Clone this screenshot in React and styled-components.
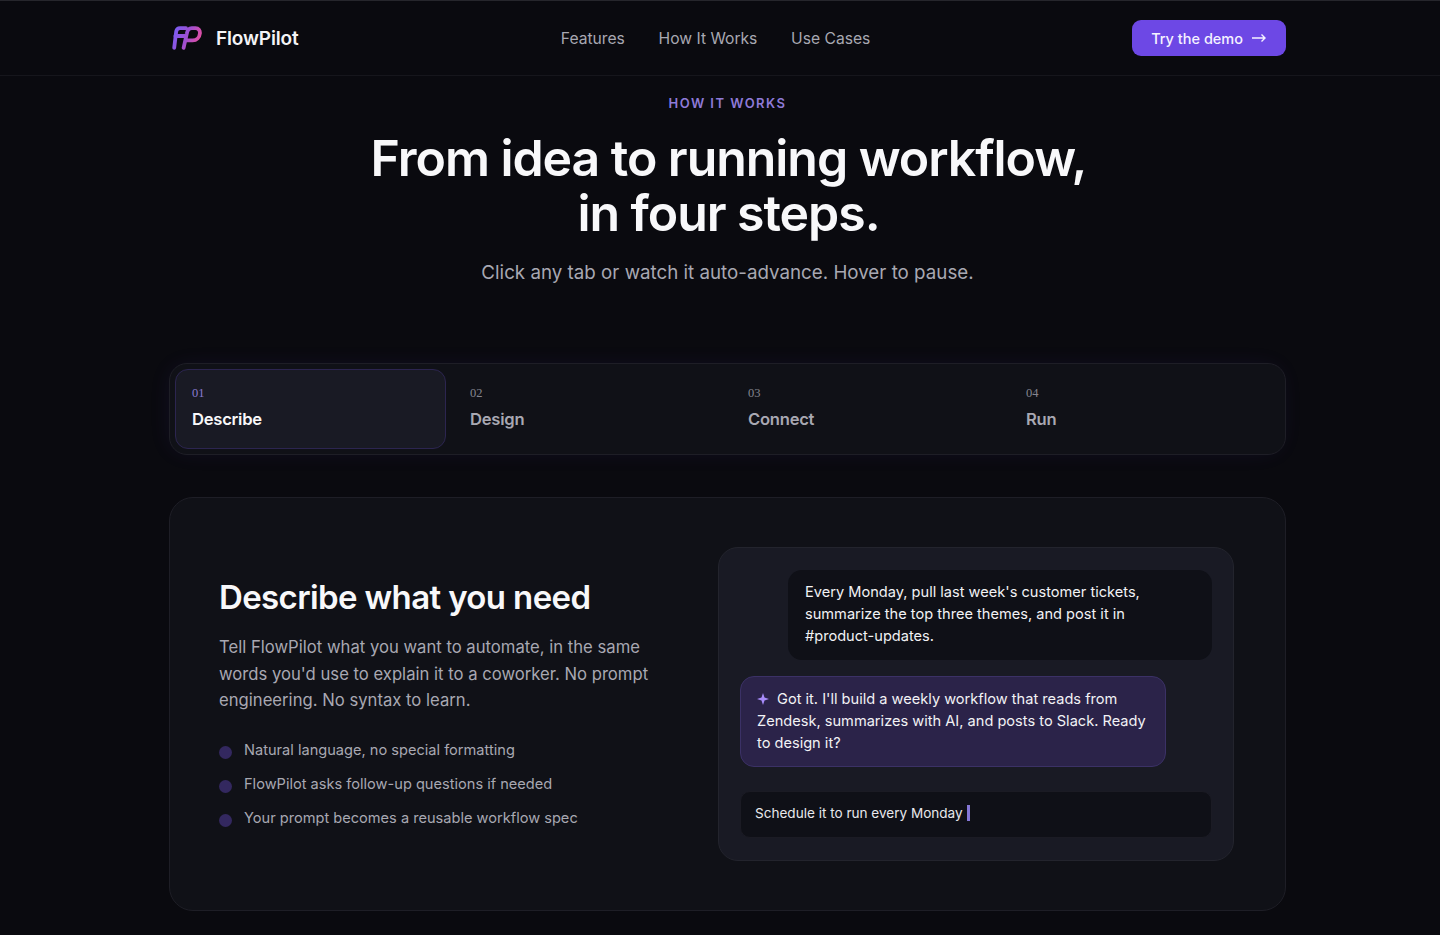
import React from 'react'
import styled, { createGlobalStyle } from 'styled-components'

const tabs = [
  { num: '01', label: 'Describe', active: true },
  { num: '02', label: 'Design' },
  { num: '03', label: 'Connect' },
  { num: '04', label: 'Run' },
]

const points = [
  'Natural language, no special formatting',
  'FlowPilot asks follow-up questions if needed',
  'Your prompt becomes a reusable workflow spec',
]

const navLinks = ['Features', 'How It Works', 'Use Cases']

export default function App() {
  return (
    <Page>
      <GlobalStyle />
      <Header>
        <Nav>
          <Brand>
            <Logo />
            <BrandName>FlowPilot</BrandName>
          </Brand>
          <NavLinks>
            {navLinks.map(link => (
              <NavLink key={link}>{link}</NavLink>
            ))}
          </NavLinks>
          <DemoButton>
            Try the demo
            <ArrowIcon />
          </DemoButton>
        </Nav>
      </Header>

      <Main>
        <Intro>
          <Eyebrow>HOW IT WORKS</Eyebrow>
          <Title>
            From idea to running workflow,
            <br />
            in four steps.
          </Title>
          <Lead>Click any tab or watch it auto-advance. Hover to pause.</Lead>
        </Intro>

        <TabBar>
          {tabs.map(tab => (
            <Tab key={tab.num} $active={tab.active}>
              <TabNum $active={tab.active}>{tab.num}</TabNum>
              <TabLabel $active={tab.active}>{tab.label}</TabLabel>
            </Tab>
          ))}
        </TabBar>

        <Card>
          <Copy>
            <CardTitle>Describe what you need</CardTitle>
            <CardText>
              Tell FlowPilot what you want to automate, in the same words you'd use to explain it
              to a coworker. No prompt engineering. No syntax to learn.
            </CardText>
            <Points>
              {points.map(point => (
                <Point key={point}>{point}</Point>
              ))}
            </Points>
          </Copy>

          <Chat>
            <UserBubble>
              Every Monday, pull last week's customer tickets, summarize the top three themes, and
              post it in #product-updates.
            </UserBubble>
            <BotBubble>
              <Sparkle />
              Got it. I'll build a weekly workflow that reads from Zendesk, summarizes with AI, and
              posts to Slack. Ready to design it?
            </BotBubble>
            <ChatInput>
              Schedule it to run every Monday <Caret />
            </ChatInput>
          </Chat>
        </Card>
      </Main>
    </Page>
  )
}

///////////////////////////////////////////////////////////////////////////////////

function Logo() {
  return (
    <LogoSvg viewBox="0 0 30 24" fill="none">
      <defs>
        <linearGradient id="fp" x1="2" y1="4" x2="29" y2="16" gradientUnits="userSpaceOnUse">
          <stop offset="0" stopColor="#7a5cf2" />
          <stop offset="0.5" stopColor="#a04fd0" />
          <stop offset="1" stopColor="#ec4f9c" />
        </linearGradient>
      </defs>
      <g stroke="url(#fp)" strokeWidth="3.8" strokeLinecap="round" strokeLinejoin="round">
        <path d="M14 2.2H8C5.8 2.2 4.6 3.4 4.2 5.4L2.2 21.8" />
        <path d="M13 10H3.4" />
        <path d="M11.6 21.8L14.8 7.6C15.4 4 17 2.2 19.8 2.2H23.4C26.6 2.2 28.2 4.4 27.9 7.4C27.5 11.4 24.6 14.4 20.6 14.4H15" />
      </g>
    </LogoSvg>
  )
}

function ArrowIcon() {
  return (
    <ArrowSvg viewBox="0 0 16 10" fill="none">
      <path d="M1 5h13M10.5 1.5L14 5l-3.5 3.5" stroke="currentColor" strokeWidth="1.4" />
    </ArrowSvg>
  )
}

function Sparkle() {
  return (
    <SparkleSvg viewBox="0 0 12 12">
      <path d="M6 0L7.5 4.5L12 6L7.5 7.5L6 12L4.5 7.5L0 6L4.5 4.5Z" fill="#a78bfa" />
    </SparkleSvg>
  )
}

///////////////////////////////////////////////////////////////////////////////////

const GlobalStyle = createGlobalStyle`
  html, body {
    margin: 0;
    background: #0a0a0f;
    overflow: hidden;
  }
  * {
    box-sizing: border-box;
  }
`

const Page = styled.div`
  width: 1455px;
  height: 935px;
  overflow: hidden;
  background: #0a0a0f;
  color: #fff;
  font-family: Inter, "Liberation Sans", sans-serif;
`

const Header = styled.header`
  height: 76px;
  border-top: 1px solid #26262c;
  border-bottom: 1px solid #16161c;
`

const Nav = styled.nav`
  width: 1117px;
  height: 74px;
  margin: 0 auto;
  padding-left: 3px;
  display: flex;
  align-items: center;
  justify-content: space-between;
`

const Brand = styled.div`
  display: flex;
  align-items: center;
  gap: 14px;
  width: 130px;
`

const LogoSvg = styled.svg`
  flex: none;
  width: 30px;
  height: 24px;
`

const BrandName = styled.span`
  font-size: 19px;
  font-weight: 600;
  letter-spacing: -0.15px;
  color: #f4f4f6;
`

const NavLinks = styled.div`
  display: flex;
  gap: 33.7px;
  margin-right: 3px;
`

const NavLink = styled.a`
  font-size: 15.65px;
  color: #a8a8b2;
`

const DemoButton = styled.button`
  display: flex;
  align-items: center;
  gap: 8px;
  height: 36px;
  padding: 0 19px;
  border: 0;
  border-radius: 9px;
  background: #6d48e5;
  color: #f5f2ff;
  font-family: inherit;
  font-size: 14.5px;
  font-weight: 500;
`

const ArrowSvg = styled.svg`
  width: 16px;
  height: 10px;
`

const Main = styled.main`
  width: 1117px;
  margin: 0 auto;
`

const Intro = styled.section`
  display: flex;
  flex-direction: column;
  align-items: center;
  padding-top: 19px;
`

const Eyebrow = styled.div`
  font-size: 13px;
  line-height: 16px;
  font-weight: 600;
  letter-spacing: 1.45px;
  color: #8e7ad8;
`

const Title = styled.h1`
  margin: 20px 0 0;
  padding-left: 2px;
  font-size: 50px;
  line-height: 55px;
  font-weight: 600;
  letter-spacing: -1.05px;
  text-align: center;
  color: #f8f8fa;
`

const Lead = styled.p`
  margin: 18px 0 0;
  font-size: 18.76px;
  line-height: 28px;
  color: #a8a8b2;
`

const TabBar = styled.div`
  display: grid;
  grid-template-columns: repeat(4, 271px);
  gap: 7px;
  margin-top: 76px;
  height: 92px;
  padding: 5px;
  border: 1px solid #1e1e26;
  border-radius: 18px;
  background: #101117;
  box-shadow: -2px 0 24px -6px rgba(109, 72, 229, 0.12);
`

const Tab = styled.div`
  padding: 17px 16px 0;
  border-radius: 13px;
  border: 1px solid ${p => (p.$active ? '#2c2550' : 'transparent')};
  background: ${p => (p.$active ? '#191a24' : 'transparent')};
`

const TabNum = styled.div`
  font-family: "Liberation Serif", serif;
  font-size: 12.5px;
  line-height: 13px;
  color: ${p => (p.$active ? '#8a7bd0' : '#85858f')};
`

const TabLabel = styled.div`
  margin-top: 8px;
  font-size: 16.6px;
  line-height: 22px;
  font-weight: 600;
  letter-spacing: -0.25px;
  color: ${p => (p.$active ? '#f8f8fa' : '#a8a8b2')};
`

const Card = styled.section`
  display: grid;
  grid-template-columns: 1fr 516px;
  align-items: start;
  margin-top: 42px;
  height: 414px;
  padding: 49px 51px 0 49px;
  border: 1px solid #1e1e26;
  border-radius: 24px;
  background: #101117;
`

const Copy = styled.div`
  padding-top: 30px;
  width: 440px;
`

const CardTitle = styled.h2`
  margin: 0;
  font-size: 33px;
  line-height: 40px;
  font-weight: 600;
  letter-spacing: -0.63px;
  color: #f8f8fa;
`

const CardText = styled.p`
  margin: 17px 0 0;
  font-size: 16.67px;
  line-height: 26.5px;
  color: #a8a8b2;
`

const Points = styled.ul`
  display: flex;
  flex-direction: column;
  gap: 10px;
  margin: 24px 0 0;
  padding: 0;
  list-style: none;
`

const Point = styled.li`
  display: flex;
  align-items: center;
  gap: 12px;
  height: 24px;
  font-size: 14.6px;
  color: #a8a8b2;

  &::before {
    content: '';
    flex: none;
    width: 13px;
    height: 13px;
    margin-top: 5px;
    border-radius: 50%;
    background: #33285f;
  }
`

const Chat = styled.div`
  display: flex;
  flex-direction: column;
  height: 314px;
  padding: 22px 21px 0;
  border: 1px solid #23242d;
  border-radius: 20px;
  background: #191a24;
`

const UserBubble = styled.div`
  align-self: flex-end;
  width: 424px;
  height: 90px;
  padding: 12px 17px;
  border-radius: 14px;
  background: #0f1017;
  color: #f2f2f5;
  font-size: 14.6px;
  line-height: 21.8px;
`

const BotBubble = styled.div`
  width: 426px;
  height: 91px;
  margin-top: 16px;
  padding: 12px 16px;
  border: 1px solid #3b3166;
  border-radius: 14px;
  background: #2b2349;
  color: #f2f2f5;
  font-size: 14.6px;
  line-height: 21.8px;
`

const SparkleSvg = styled.svg`
  width: 12px;
  height: 12px;
  margin-right: 8px;
  vertical-align: -1px;
`

const ChatInput = styled.div`
  display: flex;
  align-items: center;
  gap: 4px;
  height: 47px;
  margin-top: 24px;
  padding: 0 14px 3px;
  border: 1px solid #1b1b24;
  border-radius: 10px;
  background: #0f1017;
  color: #e8e8ec;
  font-size: 13.55px;
`

const Caret = styled.span`
  width: 3px;
  height: 16px;
  background: #8577d6;
`
